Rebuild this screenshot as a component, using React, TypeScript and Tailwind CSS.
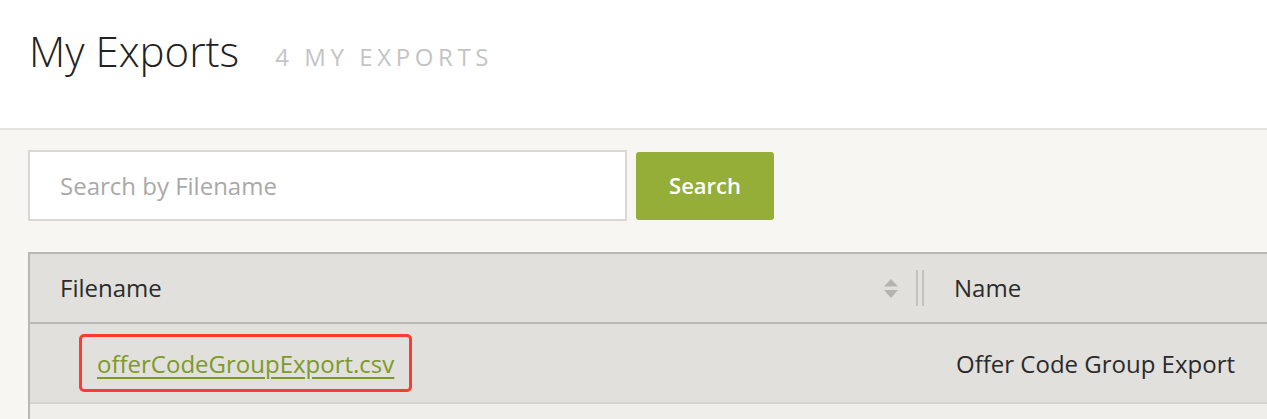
import React from 'react';

const SortIcon = () => (
    <svg width="14" height="19" viewBox="0 0 14 19" className="block">
        <path d="M7 0 L14 7.5 L0 7.5 Z" fill="#b5b3af" />
        <path d="M0 11 L14 11 L7 19 Z" fill="#b5b3af" />
    </svg>
);

const App = () => {
    return (
        <div className="w-[1267px] h-[419px] overflow-hidden bg-[#f7f6f3] font-['Open_Sans',sans-serif]">
            {/* Page header */}
            <div className="h-[130px] bg-white border-b-2 border-[#e4e3e0] flex items-start pl-[29px] pt-[21px]">
                <h1 className="text-[42px] leading-[60px] font-light text-[#222]">My Exports</h1>
                <span className="ml-[36px] mt-[21px] text-[24px] leading-[30px] tracking-[4.6px] text-[#c4c4c4] uppercase">
                    4 My Exports
                </span>
            </div>

            <div className="pl-[28px] pt-[20px]">
                {/* Search bar */}
                <div className="flex items-center gap-[9px]">
                    <div className="w-[599px] h-[71px] bg-white border-2 border-[#dad8d4] flex items-center pl-[30px]">
                        <span className="text-[24px] text-[#a9a9a9]">Search by Filename</span>
                    </div>
                    <button className="w-[138px] h-[68px] rounded-[3px] bg-[#94ae38] text-white text-[22px] font-semibold">
                        Search
                    </button>
                </div>

                {/* Table */}
                <div className="mt-[31px] w-[1400px] border-t-2 border-l-2 border-[#bab8b4]">
                    <div className="flex h-[70px] bg-[#e1e0dc] border-b-2 border-[#bab8b4] text-[24px] text-[#2b2b2b]">
                        <div className="w-[900px] flex items-center justify-between pl-[30px] pr-[6px]">
                            <span>Filename</span>
                            <div className="flex items-center gap-[18px]">
                                <SortIcon />
                                <div className="flex gap-[4px] h-[36px]">
                                    <div className="w-[2px] h-full bg-[#c4c2be]" />
                                    <div className="w-[2px] h-full bg-[#c4c2be]" />
                                </div>
                            </div>
                        </div>
                        <div className="flex items-center pl-[24px]">Name</div>
                    </div>
                    <div className="flex h-[80px] bg-[#e1e0dc] border-b-2 border-[#d5d4d0] text-[24px] text-[#2b2b2b]">
                        <div className="w-[900px] flex items-center pl-[49px]">
                            <div className="h-[58px] px-[15px] pt-[2px] flex items-center border-[3px] border-[#ff3b30] rounded-[5px]">
                                <a href="#" className="text-[#7d9a28] underline underline-offset-[4px]">offerCodeGroupExport.csv</a>
                            </div>
                        </div>
                        <div className="flex items-center pl-[26px] pt-[2px]">Offer Code Group Export</div>
                    </div>
                    <div className="h-[40px] bg-[#efeeea]" />
                </div>
            </div>
        </div>
    );
};

export default App;
